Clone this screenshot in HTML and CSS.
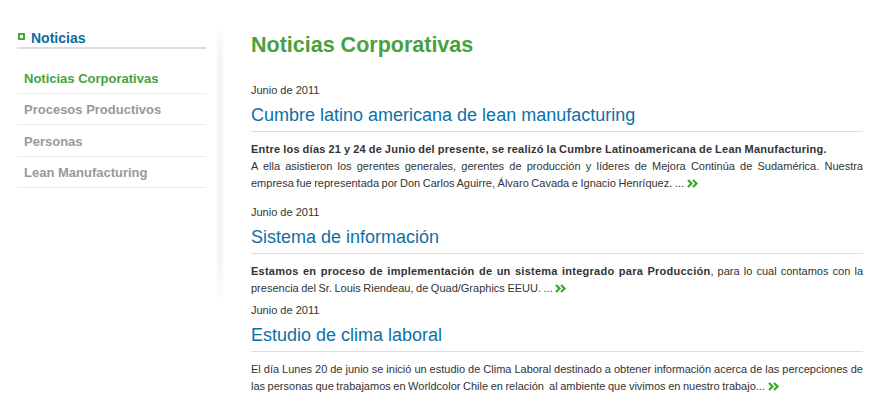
FILE: index.html
```html
<!DOCTYPE html>
<html lang="es">
<head>
<meta charset="utf-8">
<title>Noticias Corporativas</title>
<link rel="stylesheet" href="styles.css">
</head>
<body>
<div class="page">
  <aside class="sidebar">
    <h2 class="side-title"><span class="side-icon"></span>Noticias</h2>
    <ul class="menu">
      <li class="menu-item is-active">Noticias Corporativas</li>
      <li class="menu-item">Procesos Productivos</li>
      <li class="menu-item">Personas</li>
      <li class="menu-item">Lean Manufacturing</li>
    </ul>
  </aside>
  <div class="divider"></div>
  <main class="main">
    <h1 class="page-title">Noticias Corporativas</h1>

    <article class="news news-spaced">
      <div class="news-date">Junio de 2011</div>
      <h3 class="news-title">Cumbre latino americana de lean manufacturing</h3>
      <p class="news-text"><strong>Entre los días 21 y 24 de Junio del presente, se realizó la Cumbre Latinoamericana de Lean Manufacturing.</strong><br>A ella asistieron los gerentes generales, gerentes de producción y líderes de Mejora Continúa de Sudamérica. Nuestra empresa fue representada por Don Carlos Aguirre, Álvaro Cavada e Ignacio Henríquez. ... <svg class="more" width="12" height="9" viewBox="0 0 12 9"><path d="M1 1 L4.5 4.5 L1 8 M6 1 L9.5 4.5 L6 8" fill="none" stroke="#3aa62c" stroke-width="2.2"/></svg></p>
    </article>

    <article class="news">
      <div class="news-date">Junio de 2011</div>
      <h3 class="news-title">Sistema de información</h3>
      <p class="news-text"><strong>Estamos en proceso de implementación de un sistema integrado para Producción</strong>, para lo cual contamos con la presencia del Sr. Louis Riendeau, de Quad/Graphics EEUU. ... <svg class="more" width="12" height="9" viewBox="0 0 12 9"><path d="M1 1 L4.5 4.5 L1 8 M6 1 L9.5 4.5 L6 8" fill="none" stroke="#3aa62c" stroke-width="2.2"/></svg></p>
    </article>

    <article class="news">
      <div class="news-date">Junio de 2011</div>
      <h3 class="news-title">Estudio de clima laboral</h3>
      <p class="news-text">El día Lunes 20 de junio se inició un estudio de Clima Laboral destinado a obtener información acerca de las percepciones de las personas que trabajamos en Worldcolor Chile en relación&nbsp; al ambiente que vivimos en nuestro trabajo... <svg class="more" width="12" height="9" viewBox="0 0 12 9"><path d="M1 1 L4.5 4.5 L1 8 M6 1 L9.5 4.5 L6 8" fill="none" stroke="#3aa62c" stroke-width="2.2"/></svg></p>
    </article>
  </main>
</div>
</body>
</html>
```

FILE: styles.css
```css
* { box-sizing: border-box; }

html, body {
  margin: 0;
  padding: 0;
  background: #fff;
}

body {
  font-family: "Liberation Sans", Arial, sans-serif;
  color: #333;
  width: 896px;
  height: 409px;
  overflow: hidden;
}

.page {
  display: flex;
  align-items: flex-start;
}

/* Sidebar */
.sidebar {
  width: 189px;
  margin-left: 17px;
  padding-top: 31px;
  flex-shrink: 0;
}

.side-title {
  display: flex;
  align-items: center;
  margin: 0;
  font-size: 14px;
  line-height: 15px;
  font-weight: bold;
  color: #0b6ca5;
  padding-bottom: 1px;
  border-bottom: 2px solid #dcdcdc;
}

.side-icon {
  width: 7px;
  height: 7px;
  border: 2px solid #49a640;
  margin-left: 1px;
  margin-right: 6px;
  margin-top: -5px;
}

.menu {
  list-style: none;
  margin: 14px 0 0;
  padding: 0;
}

.menu-item {
  padding-top: 1px;
  line-height: 29px;
  padding-left: 7px;
  font-size: 13px;
  font-weight: bold;
  color: #999;
  border-bottom: 1px solid #ebebeb;
}

.menu-item + .menu-item:nth-child(3) {
  padding-top: 2px;
}

.menu-item.is-active {
  color: #47a23d;
}

/* faint vertical shadow between columns */
.divider {
  width: 10px;
  height: 288px;
  margin-top: 20px;
  margin-left: 9px;
  flex-shrink: 0;
  background: linear-gradient(to right, rgba(0,0,0,0) 0%, rgba(0,0,0,0.05) 50%, rgba(0,0,0,0) 100%);
  -webkit-mask-image: linear-gradient(to bottom, transparent 0%, #000 12%, #000 85%, transparent 100%);
  mask-image: linear-gradient(to bottom, transparent 0%, #000 12%, #000 85%, transparent 100%);
}

/* Main */
.main {
  width: 612px;
  margin-left: 26px;
  padding-top: 32px;
}

.page-title {
  margin: 0 0 24px;
  font-size: 21.5px;
  line-height: 26px;
  font-weight: bold;
  color: #47a23d;
}

.news {
  margin-bottom: 5px;
}

.news-spaced {
  margin-bottom: 12px;
}

.news-date {
  font-size: 11px;
  line-height: 17px;
  color: #333;
}

.news-title {
  margin: 5px 0 0;
  padding-bottom: 5px;
  font-size: 18px;
  line-height: 22px;
  font-weight: normal;
  color: #0e6fa6;
  border-bottom: 1px solid #dedede;
}

.news-text {
  margin: 9px 0 0;
  font-size: 11px;
  line-height: 17px;
  color: #333;
  text-align: justify;
  word-spacing: -0.5px;
}

.news-text strong {
  color: #333;
  letter-spacing: 0.25px;
}

.more {
  vertical-align: -1px;
}
```
